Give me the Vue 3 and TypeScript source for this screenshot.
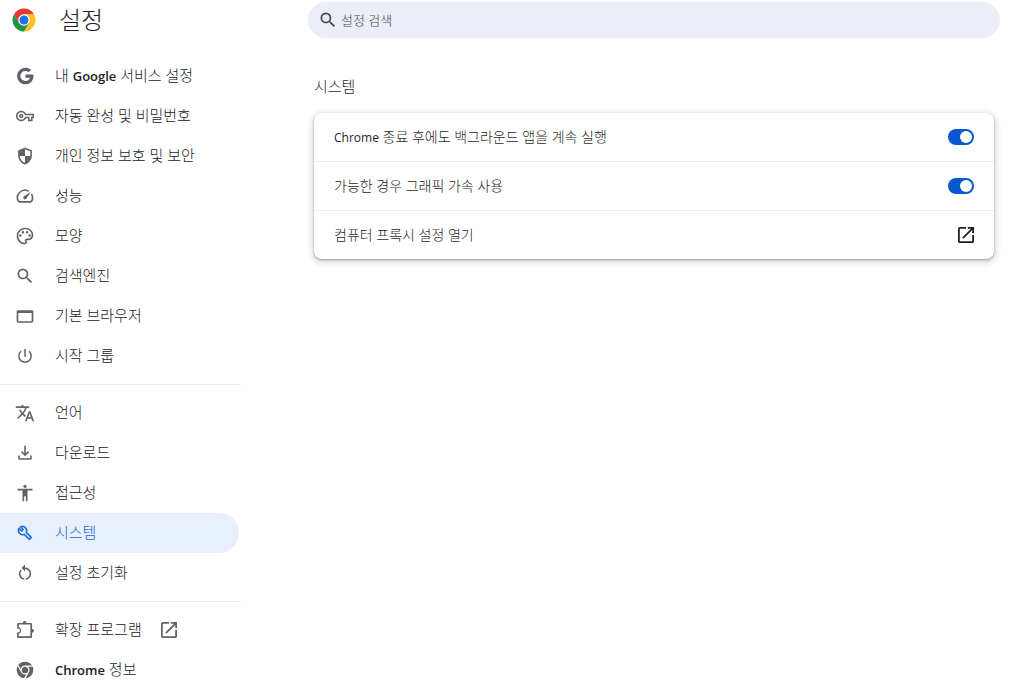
<script setup lang="ts">
import { ref } from 'vue'

interface Part {
  text: string
  latin?: boolean
}

interface MenuItem {
  id: string
  parts: Part[]
  paths: string[]
  viewBox?: string
  outlined?: boolean
  gaps?: string
  external?: boolean
}

const openPath =
  'M19 19H5V5h7V3H5c-1.11 0-2 .9-2 2v14c0 1.1.89 2 2 2h14c1.1 0 2-.9 2-2v-7h-2v7zM14 3v2h3.59l-9.83 9.83 1.41 1.41L19 6.41V10h2V3h-7z'

const searchPath =
  'M15.5 14h-.79l-.28-.27A6.47 6.47 0 0 0 16 9.5 6.5 6.5 0 1 0 9.5 16c1.61 0 3.09-.59 4.23-1.57l.27.28v.79l5 4.99L20.49 19l-4.99-5zm-6 0C7.01 14 5 11.99 5 9.5S7.01 5 9.5 5 14 7.01 14 9.5 11.99 14 9.5 14z'

const groups: MenuItem[][] = [
  [
    {
      id: 'people',
      parts: [{ text: '내 ' }, { text: 'Google', latin: true }, { text: ' 서비스 설정' }],
      paths: [
        'M12.545 10.239v3.821h5.445c-.712 2.315-2.647 3.972-5.445 3.972a6.033 6.033 0 1 1 0-12.064c1.498 0 2.866.549 3.921 1.453l2.814-2.814A9.969 9.969 0 0 0 12.545 2C7.021 2 2.543 6.477 2.543 12s4.478 10 10.002 10c8.396 0 10.249-7.85 9.426-11.748l-9.426-.013z',
      ],
    },
    {
      id: 'autofill',
      parts: [{ text: '자동 완성 및 비밀번호' }],
      viewBox: '-1.3 -1.3 26.6 26.6',
      paths: [
        'M22 19h-6v-4h-2.68c-1.14 2.42-3.6 4-6.32 4-3.86 0-7-3.14-7-7s3.14-7 7-7c2.72 0 5.17 1.58 6.32 4H24v6h-2v4zm-4-2h2v-4h2v-2H11.94l-.23-.67C11.01 8.34 9.11 7 7 7c-2.76 0-5 2.24-5 5s2.24 5 5 5c2.11 0 4.01-1.34 4.71-3.33l.23-.67H18v4zM7 15c-1.65 0-3-1.35-3-3s1.35-3 3-3 3 1.35 3 3-1.35 3-3 3zm0-4c-.55 0-1 .45-1 1s.45 1 1 1 1-.45 1-1-.45-1-1-1z',
      ],
    },
    {
      id: 'privacy',
      parts: [{ text: '개인 정보 보호 및 보안' }],
      viewBox: '-1 -1 26 26',
      paths: [
        'M12 1 3 5v6c0 5.55 3.84 10.74 9 12 5.16-1.26 9-6.45 9-12V5l-9-4zm0 2.19 7 3.11V12h-7V3.19zM5 12h7v8.93C8.28 19.78 5.53 16.11 5 12z',
      ],
    },
    {
      id: 'performance',
      parts: [{ text: '성능' }],
      paths: [
        'm20.38 8.57-1.23 1.85a8 8 0 0 1-.22 7.58H5.07A8 8 0 0 1 15.58 6.85l1.85-1.23A10 10 0 0 0 3.35 19a2 2 0 0 0 1.72 1h13.85a2 2 0 0 0 1.74-1 10 10 0 0 0-.27-10.44zm-9.79 6.84a2 2 0 0 0 2.83 0l5.66-8.49-8.49 5.66a2 2 0 0 0 0 2.83z',
      ],
    },
    {
      id: 'appearance',
      parts: [{ text: '모양' }],
      paths: [
        'M12 22C6.49 22 2 17.51 2 12S6.49 2 12 2s10 4.04 10 9c0 3.31-2.69 6-6 6h-1.77c-.28 0-.5.22-.5.5 0 .12.05.23.13.33.41.47.64 1.06.64 1.67A2.5 2.5 0 0 1 12 22zm0-18c-4.41 0-8 3.59-8 8s3.59 8 8 8c.28 0 .5-.22.5-.5a.54.54 0 0 0-.14-.35c-.41-.46-.63-1.05-.63-1.65a2.5 2.5 0 0 1 2.5-2.5H16c2.21 0 4-1.79 4-4 0-3.86-3.59-7-8-7z',
        'M5 11.5a1.5 1.5 0 1 0 3 0 1.5 1.5 0 1 0-3 0M8 7.5a1.5 1.5 0 1 0 3 0 1.5 1.5 0 1 0-3 0M13 7.5a1.5 1.5 0 1 0 3 0 1.5 1.5 0 1 0-3 0M16 11.5a1.5 1.5 0 1 0 3 0 1.5 1.5 0 1 0-3 0',
      ],
    },
    { id: 'search', parts: [{ text: '검색엔진' }], paths: [searchPath] },
    {
      id: 'browser',
      parts: [{ text: '기본 브라우저' }],
      paths: ['M20 5H4c-1.11 0-2 .7-2 1.6v11.8c0 .9.89 1.6 2 1.6h16c1.1 0 2-.7 2-1.6V6.6c0-.9-.89-1.6-2-1.6zm0 13.4H4V8.4h16v10z'],
    },
    {
      id: 'startup',
      parts: [{ text: '시작 그룹' }],
      viewBox: '-1 -1 26 26',
      paths: [
        'M13 3h-2v10h2V3zm4.83 2.17-1.42 1.42A6.92 6.92 0 0 1 19 12c0 3.87-3.13 7-7 7A6.995 6.995 0 0 1 7.58 6.58L6.17 5.17A8.932 8.932 0 0 0 3 12a9 9 0 0 0 18 0c0-2.74-1.23-5.18-3.17-6.83z',
      ],
    },
  ],
  [
    {
      id: 'languages',
      parts: [{ text: '언어' }],
      paths: [
        'm12.87 15.07-2.54-2.51.03-.03A17.52 17.52 0 0 0 14.07 6H17V4h-7V2H8v2H1v1.99h11.17C11.5 7.92 10.44 9.75 9 11.35 8.07 10.32 7.3 9.19 6.69 8h-2c.73 1.63 1.73 3.17 2.98 4.56l-5.09 5.02L4 19l5-5 3.11 3.11.76-2.04zM18.5 10h-2L12 22h2l1.12-3h4.75L21 22h2l-4.5-12zm-2.62 7 1.62-4.33L19.12 17h-3.24z',
      ],
    },
    {
      id: 'downloads',
      parts: [{ text: '다운로드' }],
      viewBox: '-.5 -.5 25 25',
      paths: ['M18.5 15v3.5h-13V15h-2v3.5c0 1.1.9 2 2 2h13c1.1 0 2-.9 2-2V15h-2zM17 11l-1.41-1.41L13 12.17V3h-2v9.17L8.41 9.59 7 11l5 5 5-5z'],
    },
    {
      id: 'a11y',
      parts: [{ text: '접근성' }],
      paths: ['M12 2c1.1 0 2 .9 2 2s-.9 2-2 2-2-.9-2-2 .9-2 2-2zm9 7h-6v13h-2v-6h-2v6H9V9H3V7h18v2z'],
    },
    {
      id: 'system',
      parts: [{ text: '시스템' }],
      outlined: true,
      paths: [
        'M4.8 6.4 8 9.6 9.8 7.8 6.6 4.6a5.2 5.2 0 0 1 7 6.7l5.9 5.9-2.4 2.4-5.9-5.9a5.2 5.2 0 0 1-6.4-7.3z',
      ],
    },
    {
      id: 'reset',
      parts: [{ text: '설정 초기화' }],
      viewBox: '-1 -1 26 26',
      paths: [
        'M12 5V1L7.5 5.5 12 10V7c3.31 0 6 2.69 6 6 0 2.97-2.17 5.43-5 5.91v2.02c3.95-.49 7-3.85 7-7.93 0-4.42-3.58-8-8-8zM6 13c0-1.65.67-3.15 1.76-4.24L6.34 7.34A8.014 8.014 0 0 0 4 13c0 4.08 3.05 7.44 7 7.93v-2.02c-2.83-.48-5-2.94-5-5.91z',
      ],
    },
  ],
  [
    {
      id: 'extensions',
      parts: [{ text: '확장 프로그램' }],
      external: true,
      paths: [
        'M19 3.5h-5.2a2.3 2.3 0 0 0-4.6 0H4a1.5 1.5 0 0 0-1.5 1.5v5.1h1a2.4 2.4 0 0 1 0 4.8h-1V20A1.5 1.5 0 0 0 4 21.5h15a1.5 1.5 0 0 0 1.5-1.5v-4.7a2.3 2.3 0 0 0 0-4.6V5A1.5 1.5 0 0 0 19 3.5zm-.5 16h-14v-2.9a4.4 4.4 0 0 0 0-8.2V5.5h14v14z',
      ],
    },
    {
      id: 'about',
      parts: [{ text: 'Chrome', latin: true }, { text: ' 정보' }],
      paths: ['M2 12a10 10 0 1 0 20 0 10 10 0 1 0-20 0'],
      gaps: 'M7.3 12a4.7 4.7 0 1 0 9.4 0 4.7 4.7 0 1 0-9.4 0M12 7.3h9.5M16.07 14.35l-4.75 8.23M7.93 14.35 3.18 6.12',
    },
  ],
]

const selected = ref('system')
const query = ref('')
const background = ref(true)
const acceleration = ref(true)
</script>

<template>
  <div class="page">
    <aside class="sidebar">
      <header class="brand">
        <svg class="logo" viewBox="0 0 48 48" aria-hidden="true">
          <circle cx="24" cy="24" r="23" fill="#fff" />
          <path d="M24 12.5h20A23 23 0 0 0 4.1 12.5l10 17.3z" fill="#e33b2e" />
          <path d="M34 29.8 24 47A23 23 0 0 0 44 12.5H24z" fill="#fcc31e" />
          <path d="M14 29.8 4.1 12.5A23 23 0 0 0 24 47l10-17.2z" fill="#229342" />
          <circle cx="24" cy="24" r="11.5" fill="#fff" />
          <circle cx="24" cy="24" r="9" fill="#1a73e8" />
        </svg>
        <h1>설정</h1>
      </header>
      <nav>
        <ul v-for="(group, i) in groups" :key="i" class="group">
          <li v-for="item in group" :key="item.id">
            <a
              :href="'#' + item.id"
              class="item"
              :class="{ active: item.id === selected }"
              @click.prevent="selected = item.id"
            >
              <svg
                class="icon"
                :class="{ outlined: item.outlined }"
                :viewBox="item.viewBox ?? '0 0 24 24'"
                aria-hidden="true"
              >
                <path v-for="p in item.paths" :key="p" :d="p" />
                <path v-if="item.gaps" class="gaps" :d="item.gaps" />
              </svg>
              <span class="label"><span v-for="part in item.parts" :key="part.text" :class="{ latin: part.latin }">{{ part.text }}</span></span>
              <svg v-if="item.external" class="open" viewBox="3 3 18 18" aria-hidden="true">
                <path :d="openPath" />
              </svg>
            </a>
          </li>
        </ul>
      </nav>
    </aside>

    <main class="main">
      <label class="search">
        <svg class="icon" viewBox="0 0 24 24" aria-hidden="true"><path :d="searchPath" /></svg>
        <input v-model="query" type="text" placeholder="설정 검색" aria-label="설정 검색" />
      </label>
      <section class="section">
        <h2>시스템</h2>
        <div class="card">
          <label class="row">
            <span><span class="latin">Chrome</span> 종료 후에도 백그라운드 앱을 계속 실행</span>
            <input v-model="background" class="toggle" type="checkbox" />
          </label>
          <label class="row">
            <span>가능한 경우 그래픽 가속 사용</span>
            <input v-model="acceleration" class="toggle" type="checkbox" />
          </label>
          <button type="button" class="row">
            <span>컴퓨터 프록시 설정 열기</span>
            <svg class="open" viewBox="3 3 18 18" aria-hidden="true"><path :d="openPath" /></svg>
          </button>
        </div>
      </section>
    </main>
  </div>
</template>

<style>
body {
  margin: 0;
  background: #fff;
}
</style>

<style scoped>
.page {
  display: flex;
  min-height: 100vh;
  font-family: 'Open Sans', 'Noto Sans CJK KR', sans-serif;
  font-weight: 300;
  color: #1f1f1f;
}

.sidebar {
  flex: 0 0 241px;
}

.brand {
  display: flex;
  align-items: center;
  gap: 23px;
  height: 40px;
  padding-left: 12px;
  margin-bottom: 16px;
}

.logo {
  width: 24px;
  height: 24px;
}

h1 {
  margin: 0;
  font-size: 24px;
  line-height: 32px;
  font-weight: 300;
  color: #202124;
}

.group {
  list-style: none;
  margin: 0;
  padding: 0;
}

.group + .group {
  margin-top: 8px;
  padding-top: 8px;
  border-top: 1px solid #e8eaed;
}

.item {
  display: flex;
  align-items: center;
  height: 40px;
  margin-right: 2px;
  padding-left: 15px;
  border-radius: 0 20px 20px 0;
  font-size: 15px;
  line-height: 20px;
  color: #202124;
  text-decoration: none;
}

.icon {
  flex: none;
  width: 20px;
  height: 20px;
  fill: #5f6368;
}

.outlined {
  stroke: #5f6368;
  stroke-width: 2;
  stroke-linejoin: round;
}

.icon.outlined {
  fill: none;
}

.gaps {
  fill: none;
  stroke: #fff;
  stroke-width: 1.5;
}

.label {
  margin-left: 20px;
  padding-bottom: 2px;
  white-space: pre;
}

.item .latin {
  font-size: 13px;
  font-weight: 600;
}

.item .open {
  margin-left: 19px;
  fill: #5f6368;
}

.active {
  background: #e8f0fe;
  color: #1967d2;
}

.active .icon {
  fill: #1a73e8;
}

.active .outlined {
  fill: none;
  stroke: #1a73e8;
}

.open {
  flex: none;
  width: 16px;
  height: 16px;
  fill: #1f1f1f;
}

.main {
  flex: 1;
  padding: 2px 16px 24px 67px;
}

.search {
  display: flex;
  align-items: center;
  gap: 3px;
  height: 36px;
  padding: 0 10px;
  border-radius: 18px;
  background: #ebeef8;
}

.search .icon {
  fill: #474747;
}

.search input {
  flex: 1;
  min-width: 0;
  padding: 0;
  border: 0;
  outline: 0;
  background: transparent;
  font: inherit;
  font-size: 13px;
  line-height: 20px;
  color: #1f1f1f;
}

.search input::placeholder {
  color: #474747;
  opacity: 1;
}

.section {
  padding: 38px 6px 0;
}

h2 {
  margin: 0 0 17px;
  font-size: 15px;
  line-height: 20px;
  font-weight: 300;
}

.card {
  border-radius: 8px;
  background: #fff;
  box-shadow: 0 1px 2px rgba(0, 0, 0, 0.3), 0 2px 6px 2px rgba(0, 0, 0, 0.15);
}

.row {
  display: flex;
  align-items: center;
  justify-content: space-between;
  box-sizing: border-box;
  width: 100%;
  min-height: 48px;
  padding: 0 20px;
  border: 0;
  background: none;
  font: inherit;
  font-size: 14px;
  line-height: 20px;
  color: #1f1f1f;
  text-align: left;
  cursor: pointer;
}

.row + .row {
  min-height: 49px;
  border-top: 1px solid #ebebeb;
}

.row .latin {
  font-size: 12px;
  font-weight: 400;
}

.toggle {
  appearance: none;
  flex: none;
  width: 26px;
  height: 16px;
  margin: 0;
  padding: 2px;
  border-radius: 8px;
  background: #0b57d0;
  cursor: pointer;
}

.toggle:not(:checked) {
  background: #747775;
}

.toggle::before {
  content: '';
  display: block;
  width: 12px;
  height: 12px;
  border-radius: 50%;
  background: #fff;
}

.toggle:checked::before {
  margin-left: auto;
}
</style>
